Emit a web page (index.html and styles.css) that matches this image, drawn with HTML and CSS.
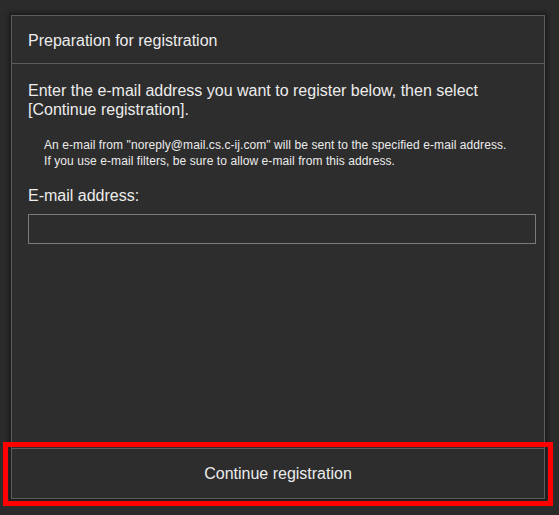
FILE: index.html
```html
<!DOCTYPE html>
<html>
<head>
<meta charset="utf-8">
<link rel="stylesheet" href="styles.css">
</head>
<body>
<div class="panel">
  <div class="panel-header">Preparation for registration</div>
  <div class="panel-body">
    <p class="lead">Enter the e-mail address you want to register below, then select [Continue registration].</p>
    <div class="note">
      <div>An e-mail from "noreply@mail.cs.c-ij.com" will be sent to the specified e-mail address.</div>
      <div>If you use e-mail filters, be sure to allow e-mail from this address.</div>
    </div>
    <label class="field-label" for="email">E-mail address:</label>
    <input class="field-input" id="email" type="text">
  </div>
  <div class="panel-footer">Continue registration</div>
</div>
<div class="highlight"></div>
</body>
</html>
```

FILE: styles.css
```css
html, body {
  margin: 0;
  padding: 0;
  background: #2b2b2b;
  height: 515px;
  overflow: hidden;
  font-family: Arial, "Liberation Sans", sans-serif;
  color: #ececec;
}

.panel {
  box-sizing: border-box;
  margin: 15px 0 0 11px;
  width: 534px;
  height: 484px;
  background: #2d2d2d;
  border: 1px solid #5c5c5c;
  box-shadow: 0 0 5px 2px rgba(0, 0, 0, 0.45);
  display: flex;
  flex-direction: column;
}

.panel-header {
  font-size: 16px;
  line-height: 18px;
  padding: 16px 16px 13px;
  border-bottom: 1px solid #5c5c5c;
}

.panel-body {
  flex: 1;
  padding: 17px 8px 0 16px;
  display: flex;
  flex-direction: column;
}

.lead {
  margin: 0;
  font-size: 16px;
  line-height: 19px;
}

.note {
  margin: 18px 0 0 16px;
  font-size: 12px;
  line-height: 16px;
  letter-spacing: 0.08px;
}

.field-label {
  margin-top: 17px;
  font-size: 16px;
  line-height: 19px;
}

.field-input {
  box-sizing: border-box;
  margin: 9px 0 0;
  width: 100%;
  height: 30px;
  background: #2d2d2d;
  border: 1px solid #7a7a7a;
  border-radius: 0;
  outline: none;
  padding: 0 6px;
  color: #ececec;
  font-family: inherit;
  font-size: 14px;
}

.panel-footer {
  height: 50px;
  border-top: 1px solid #5c5c5c;
  display: flex;
  align-items: center;
  justify-content: center;
  font-size: 16px;
  box-sizing: border-box;
}

.highlight {
  position: absolute;
  left: 3px;
  top: 442px;
  width: 550px;
  height: 64px;
  box-sizing: border-box;
  border: 5px solid #ff0000;
  pointer-events: none;
}
```
